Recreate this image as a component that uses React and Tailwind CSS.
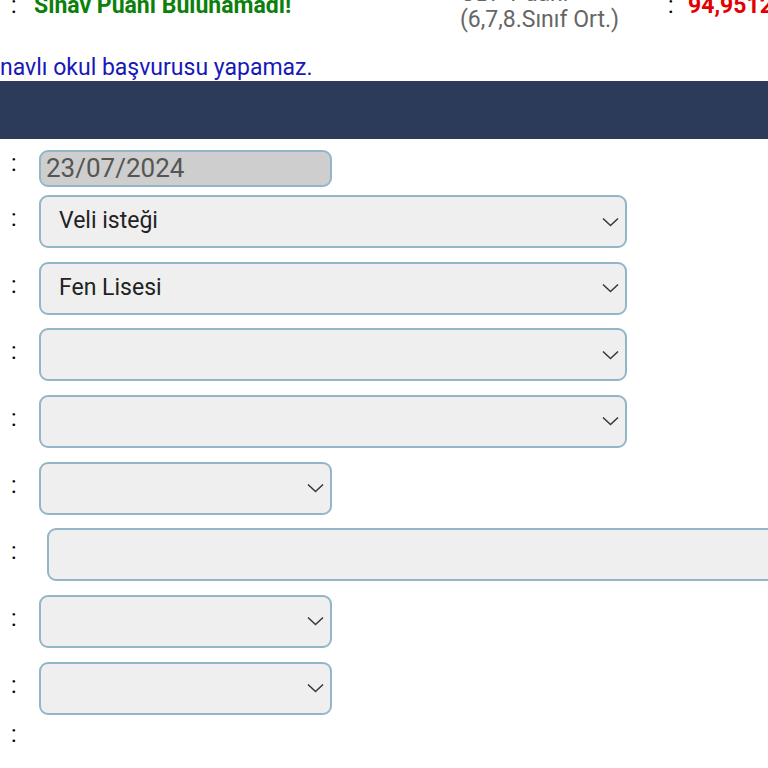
import React from "react";

function Chevron() {
  return (
    <svg width="17" height="10" viewBox="0 0 17 10" className="shrink-0">
      <polyline points="1,1.5 8.5,8.5 16,1.5" fill="none" stroke="#3a3a3a" strokeWidth="1.6" />
    </svg>
  );
}

function Colon({ w = "w-[39px]", pb = "pb-[5px]" }) {
  return (
    <div className={`${w} ${pb} shrink-0 pl-[11px] text-[23px] leading-[28px] text-black`}>:</div>
  );
}

function SelectBox({ value, short }) {
  return (
    <div
      className={`${short ? "w-[293px]" : "w-[588px]"} h-[53px] flex items-center justify-between pl-[18px] pr-[6px] border-2 border-[#93b6c7] rounded-[9px] bg-[#efefef] text-[23px] text-[#222]`}
    >
      <span>{value}</span>
      <Chevron />
    </div>
  );
}

const rows = [
  { value: "Veli isteği" },
  { value: "Fen Lisesi" },
  { value: "" },
  { value: "" },
  { value: "", short: true },
  { input: true },
  { value: "", short: true },
  { value: "", short: true },
];

export default function App() {
  return (
    <div className="w-[768px] h-[768px] overflow-hidden bg-white font-['Roboto','Liberation_Sans',sans-serif]">
      <div className="mt-[-19px] h-[52px] flex items-start whitespace-nowrap">
        <div className="w-[460px] shrink-0 pt-[11px] flex text-[23px] leading-[28px]">
          <span className="pl-[11px] w-[34px] text-black">:</span>
          <span className="font-bold text-[#0b800b]">Sınav Puanı Bulunamadı!</span>
        </div>
        <div className="w-[208px] shrink-0 text-[23px] leading-[26px] text-[#666]">
          <div>OBP Puanı</div>
          <div>(6,7,8.Sınıf Ort.)</div>
        </div>
        <div className="pt-[11px] flex text-[23px] leading-[28px]">
          <span className="w-[20px] text-black">:</span>
          <span className="font-bold text-[#e30000]">94,9512</span>
        </div>
      </div>

      <div className="mt-[21px] h-[27px] text-[23px] leading-[27px] text-[#1818b8] whitespace-nowrap">
        navlı okul başvurusu yapamaz.
      </div>

      <div className="h-[58px] bg-[#2c3b5a]" />

      <div className="mt-[11px] flex items-center">
        <Colon pb="pb-[9px]" />
        <div className="w-[293px] h-[37px] flex items-center pl-[5px] border-2 border-[#93b6c7] rounded-[9px] bg-[#cecece] text-[26px] text-[#555]">
          23/07/2024
        </div>
      </div>

      <div className="mt-[8px] flex flex-col gap-[13.67px]">
        {rows.map((r, i) =>
          r.input ? (
            <div key={i} className="flex items-center">
              <Colon w="w-[47px]" />
              <div className="w-[760px] h-[53px] shrink-0 border-2 border-[#93b6c7] rounded-[9px] bg-[#efefef]" />
            </div>
          ) : (
            <div key={i} className="flex items-center">
              <Colon />
              <SelectBox value={r.value} short={r.short} />
            </div>
          )
        )}
      </div>

      <div className="mt-[6px] flex">
        <Colon pb="pb-0" />
      </div>
    </div>
  );
}
